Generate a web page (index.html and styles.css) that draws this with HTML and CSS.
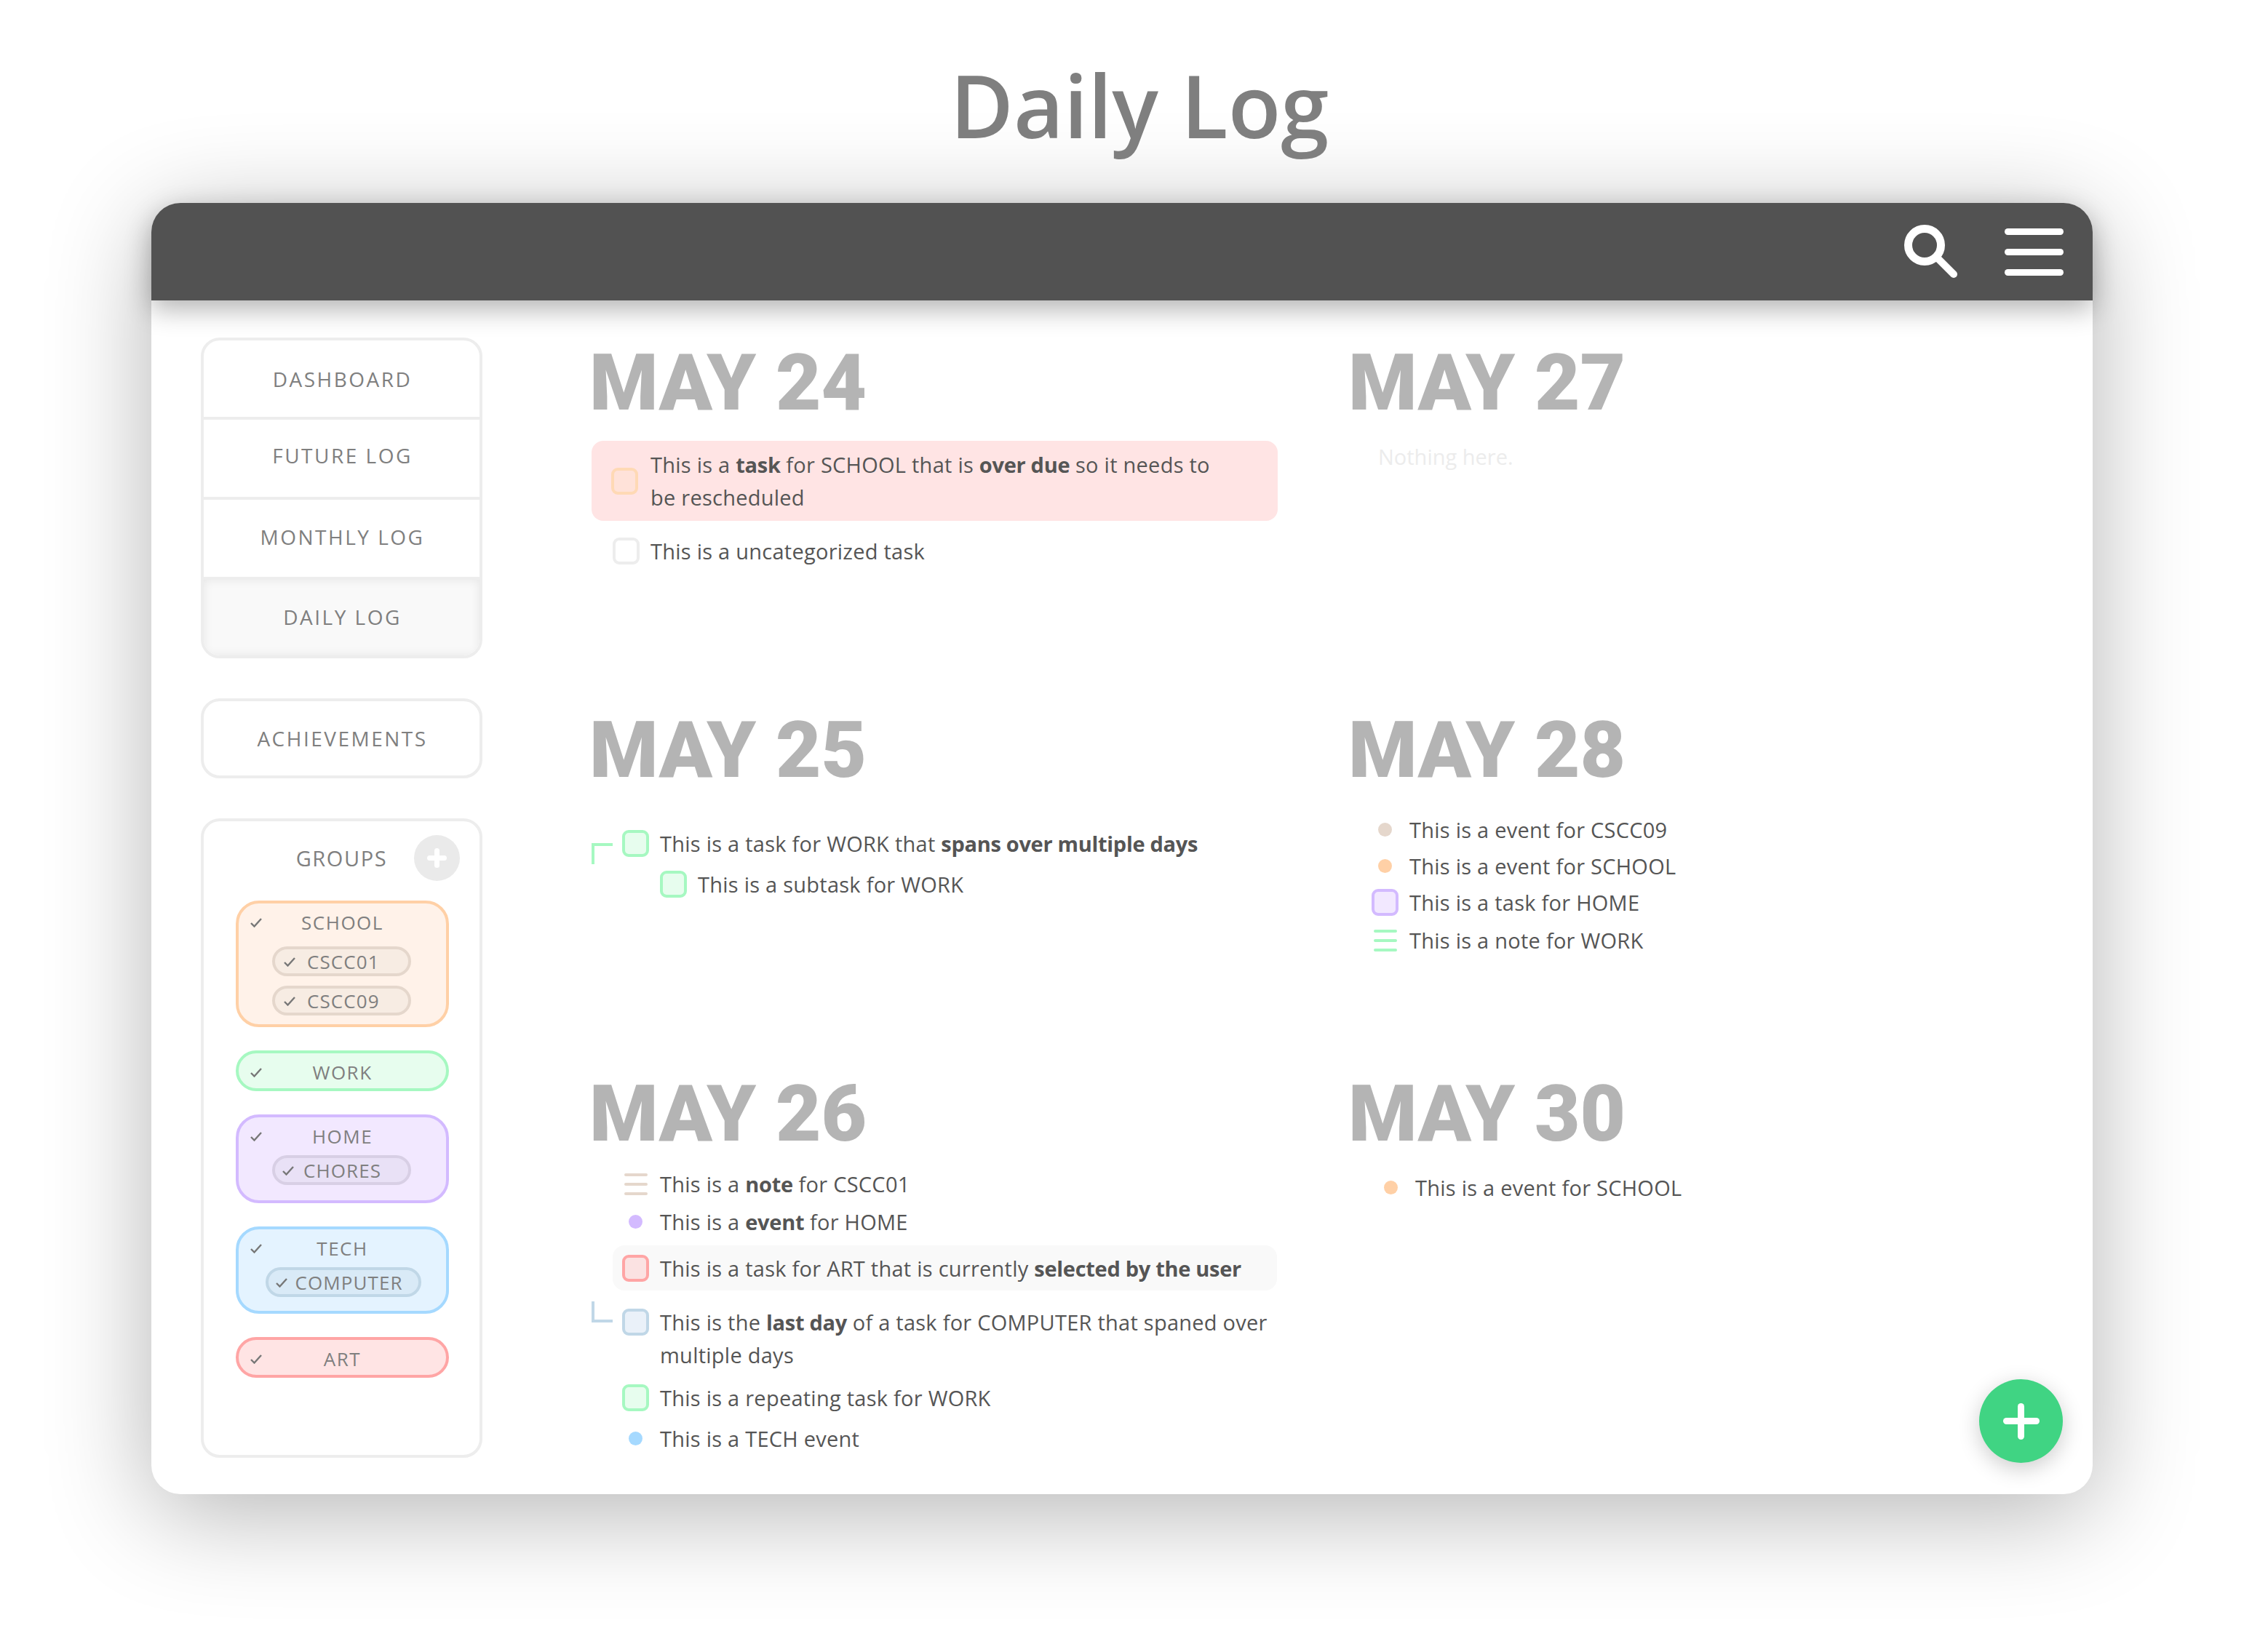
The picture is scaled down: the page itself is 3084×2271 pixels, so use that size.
FILE: index.html
```html
<!DOCTYPE html>
<html lang="en">
<head>
    <meta charset="UTF-8">
    <title>Daily Log</title>
    <link rel="stylesheet" href="styles.css">
</head>
<body>
    <h1 class="page-title">Daily Log</h1>
    <div class="window">
        <header class="topbar">
            <svg class="icon-search" width="74" height="74" viewBox="0 0 74 74">
                <circle cx="28" cy="28" r="22.5" fill="none" stroke="#fff" stroke-width="11"/>
                <line x1="44" y1="44" x2="68" y2="68" stroke="#fff" stroke-width="10" stroke-linecap="round"/>
            </svg>
            <div class="icon-menu"><span></span><span></span><span></span></div>
        </header>
        <div class="content">
            <aside class="sidebar">
                <nav class="panel nav">
                    <a class="nav-item">DASHBOARD</a>
                    <a class="nav-item raised">FUTURE LOG</a>
                    <a class="nav-item raised-less">MONTHLY LOG</a>
                    <a class="nav-item active">DAILY LOG</a>
                </nav>
                <a class="panel achievements">ACHIEVEMENTS</a>
                <section class="panel groups">
                    <div class="groups-head">
                        <span></span>
                        <span class="groups-title">GROUPS</span>
                        <button class="add-group"><span class="plus"></span></button>
                    </div>
                    <div class="group school school-box">
                        <div class="group-head"><svg class="check" viewBox="0 0 16 14"><path d="M1 8l4.500 4.500L15 2"/></svg><span class="group-name">SCHOOL</span></div>
                        <div class="pills pills-loose">
                            <div class="pill"><svg class="check" viewBox="0 0 16 14"><path d="M1 8l4.500 4.500L15 2"/></svg>CSCC01</div>
                            <div class="pill"><svg class="check" viewBox="0 0 16 14"><path d="M1 8l4.500 4.500L15 2"/></svg>CSCC09</div>
                        </div>
                    </div>
                    <div class="group work">
                        <div class="group-head"><svg class="check" viewBox="0 0 16 14"><path d="M1 8l4.500 4.500L15 2"/></svg><span class="group-name">WORK</span></div>
                    </div>
                    <div class="group home home-box">
                        <div class="group-head"><svg class="check" viewBox="0 0 16 14"><path d="M1 8l4.500 4.500L15 2"/></svg><span class="group-name">HOME</span></div>
                        <div class="pills">
                            <div class="pill pill-chores"><svg class="check" viewBox="0 0 16 14"><path d="M1 8l4.500 4.500L15 2"/></svg>CHORES</div>
                        </div>
                    </div>
                    <div class="group tech tech-box">
                        <div class="group-head"><svg class="check" viewBox="0 0 16 14"><path d="M1 8l4.500 4.500L15 2"/></svg><span class="group-name">TECH</span></div>
                        <div class="pills">
                            <div class="pill pill-computer"><svg class="check" viewBox="0 0 16 14"><path d="M1 8l4.500 4.500L15 2"/></svg>COMPUTER</div>
                        </div>
                    </div>
                    <div class="group art">
                        <div class="group-head"><svg class="check" viewBox="0 0 16 14"><path d="M1 8l4.500 4.500L15 2"/></svg><span class="group-name">ART</span></div>
                    </div>
                </section>
            </aside>

            <main class="days">
                <section class="day">
                    <h2 class="day-title">MAY 24</h2>
                    <div class="entries list-24">
                        <div class="entry overdue">
                            <span class="box box-overdue"></span>
                            <span class="entry-text">This is a <b>task</b> for SCHOOL that is <b>over due</b> so it needs to<br>be rescheduled</span>
                        </div>
                        <div class="entry uncategorized gap-19">
                            <span class="box box-plain"></span>
                            <span class="entry-text">This is a uncategorized task</span>
                        </div>
                    </div>
                </section>
                <section class="day">
                    <h2 class="day-title">MAY 27</h2>
                    <p class="nothing">Nothing here.</p>
                </section>

                <section class="day">
                    <h2 class="day-title">MAY 25</h2>
                    <div class="entries list-25">
                        <div class="entry slot-left">
                            <span class="connector connector-start"></span>
                            <span class="box work"></span>
                            <span class="entry-text">This is a task for WORK that <b>spans over multiple days</b></span>
                        </div>
                        <div class="entry subtask gap-11">
                            <span class="box work"></span>
                            <span class="entry-text">This is a subtask for WORK</span>
                        </div>
                    </div>
                </section>
                <section class="day">
                    <h2 class="day-title">MAY 28</h2>
                    <div class="entries list-28">
                        <div class="entry slot-right">
                            <span class="slot"><i class="dot dot-cscc"></i></span>
                            <span class="entry-text">This is a event for CSCC09</span>
                        </div>
                        <div class="entry slot-right gap-5">
                            <span class="slot"><i class="dot dot-school"></i></span>
                            <span class="entry-text">This is a event for SCHOOL</span>
                        </div>
                        <div class="entry slot-right gap-5">
                            <span class="box home"></span>
                            <span class="entry-text">This is a task for HOME</span>
                        </div>
                        <div class="entry slot-right gap-7">
                            <span class="slot"><i class="note note-work"><u></u><u></u><u></u></i></span>
                            <span class="entry-text">This is a note for WORK</span>
                        </div>
                    </div>
                </section>

                <section class="day">
                    <h2 class="day-title">MAY 26</h2>
                    <div class="entries list-26">
                        <div class="entry slot-left">
                            <span class="slot"><i class="note note-cscc"><u></u><u></u><u></u></i></span>
                            <span class="entry-text">This is a <b>note</b> for CSCC01</span>
                        </div>
                        <div class="entry slot-left gap-7">
                            <span class="slot"><i class="dot dot-home"></i></span>
                            <span class="entry-text">This is a <b>event</b> for HOME</span>
                        </div>
                        <div class="entry selected gap-10">
                            <span class="box art"></span>
                            <span class="entry-text">This is a task for ART that is currently <b>selected by the user</b></span>
                        </div>
                        <div class="entry slot-left top-aligned gap-21">
                            <span class="connector connector-end"></span>
                            <span class="box computer"></span>
                            <span class="entry-text">This is the <b>last day</b> of a task for COMPUTER that spaned over<br>multiple days</span>
                        </div>
                        <div class="entry slot-left gap-14">
                            <span class="box work"></span>
                            <span class="entry-text">This is a repeating task for WORK</span>
                        </div>
                        <div class="entry slot-left gap-11">
                            <span class="slot"><i class="dot dot-tech"></i></span>
                            <span class="entry-text">This is a TECH event</span>
                        </div>
                    </div>
                </section>
                <section class="day">
                    <h2 class="day-title">MAY 30</h2>
                    <div class="entries list-30">
                        <div class="entry slot-far">
                            <span class="slot"><i class="dot dot-school"></i></span>
                            <span class="entry-text">This is a event for SCHOOL</span>
                        </div>
                    </div>
                </section>
            </main>
            <button class="fab"><span class="plus"></span></button>
        </div>
    </div>
</body>
</html>
```

FILE: styles.css
```css
* {
    box-sizing: border-box;
}
body {
    margin: 0;
    width: 3084px;
    height: 2271px;
    background: #fff;
    font-family: "Open Sans", sans-serif;
    overflow: hidden;
}
.page-title {
    margin: 0;
    height: 279px;
    padding: 59px 0 0 48px;
    text-align: center;
    font-family: "Open Sans", sans-serif;
    font-size: 119px;
    line-height: 170px;
    font-weight: 600;
    color: #7f7f7f;
    position: relative;
    z-index: 1;
}
.window {
    width: 2668px;
    margin-left: 208px;
    background: #fff;
    border-radius: 40px;
    box-shadow: 0 24px 140px rgba(0, 0, 0, 0.3);
}
.topbar {
    height: 134px;
    background: #525252;
    border-radius: 40px 40px 0 0;
    box-shadow: 0 12px 36px rgba(0, 0, 0, 0.3);
    display: flex;
    align-items: flex-start;
    padding: 30px 40px 0 0;
    justify-content: flex-end;
    gap: 64px;
    position: relative;
}
.icon-menu {
    width: 81px;
    display: flex;
    flex-direction: column;
    gap: 19px;
    margin-top: 5px;
}
.icon-menu span {
    height: 9px;
    background: #fff;
    border-radius: 5px;
}

.content {
    display: flex;
    padding: 51px 0 50px 68px;
    position: relative;
}
.sidebar {
    width: 387px;
    display: flex;
    flex-direction: column;
    gap: 55px;
    flex-shrink: 0;
}
.panel {
    border: 4px solid #ededed;
    border-radius: 26px;
    color: #7f7f7f;
    font-size: 28px;
    font-weight: 500;
    letter-spacing: 2.5px;
    background: #fff;
}
.nav {
    height: 441px;
    display: flex;
    flex-direction: column;
    overflow: hidden;
}
.nav-item {
    height: 110px;
    display: flex;
    align-items: center;
    justify-content: center;
    border-bottom: 4px solid #ededed;
    padding-left: 2px;
}
.nav-item:first-child {
    height: 109px;
}
.nav-item.raised {
    padding-bottom: 8px;
}
.nav-item.raised-less {
    padding-bottom: 5px;
}
.nav-item.active {
    flex: 1;
    height: auto;
    border-bottom: none;
    padding-bottom: 3px;
    background: #f9f9f9;
    box-shadow: inset 0 0 14px rgba(0, 0, 0, 0.08);
}
.achievements {
    height: 110px;
    display: flex;
    align-items: center;
    justify-content: center;
    padding-left: 2px;
}
.groups {
    height: 879px;
    padding: 19px 0 0;
    display: flex;
    flex-direction: column;
    align-items: center;
    gap: 32px;
}
.groups-head {
    width: 100%;
    display: grid;
    grid-template-columns: 1fr auto 1fr;
    align-items: center;
    margin-bottom: -5px;
}
.groups-title {
    font-size: 29px;
    letter-spacing: 1.6px;
}
.add-group {
    justify-self: end;
    margin-right: 27px;
    width: 63px;
    height: 63px;
    border: none;
    border-radius: 50%;
    background: #eaeaea;
    display: flex;
    align-items: center;
    justify-content: center;
    padding: 0;
}
.add-group .plus {
    width: 27px;
    height: 27px;
    --t: 7px;
}
.plus {
    display: block;
    position: relative;
    --t: 9px;
}
.plus::before, .plus::after {
    content: "";
    position: absolute;
    background: #fff;
    border-radius: 5px;
}
.plus::before {
    left: 0;
    right: 0;
    top: calc(50% - var(--t) / 2);
    height: var(--t);
}
.plus::after {
    top: 0;
    bottom: 0;
    left: calc(50% - var(--t) / 2);
    width: var(--t);
}

.group {
    width: 293px;
    height: 56px;
    margin-left: 2px;
    border: 4px solid;
    border-radius: 32px;
    font-size: 26px;
    letter-spacing: 1.5px;
    flex-shrink: 0;
}
.school-box {
    height: 174px;
}
.home-box {
    height: 122px;
}
.tech-box {
    height: 120px;
}
.school.group {
    border-color: #ffd0a6;
    background: #fff2e9;
}
.work.group {
    border-color: #a6f8c1;
    background: #e7fdee;
}
.home.group {
    border-color: #d3baff;
    background: #f2e8ff;
}
.tech.group {
    border-color: #a5d9ff;
    background: #e4f3ff;
}
.art.group {
    border-color: #ffa5a5;
    background: #ffe4e4;
}
.group-head {
    height: 44px;
    padding-top: 8px;
    display: grid;
    grid-template-columns: 1fr auto 1fr;
    align-items: center;
    padding-left: 16px;
    padding-right: 16px;
    line-height: 36px;
}
.check {
    width: 16px;
    height: 14px;
    fill: none;
    stroke: #777;
    stroke-width: 2.4;
}
.pills {
    margin-top: 8px;
    display: flex;
    flex-direction: column;
    align-items: center;
    gap: 13px;
    letter-spacing: 1.1px;
}
.pills-loose {
    margin-top: 15px;
}
.pill {
    width: 191px;
    height: 41px;
    border-radius: 21px;
    border: 4px solid #e5d7cc;
    background: #f7ece3;
    display: flex;
    align-items: center;
    gap: 16px;
    padding-left: 12px;
    margin-left: -2px;
}
.pill-chores {
    border-color: #d8cfe5;
    background: #e9e1f6;
    gap: 13px;
    padding-left: 10px;
}
.pill-computer {
    width: 214px;
    border-color: #c0d7e7;
    background: #d9eaf7;
    gap: 11px;
    padding-left: 10px;
    margin-left: 2px;
}

.days {
    margin-left: 147px;
    flex: 1;
    display: grid;
    grid-template-columns: 1043px 1fr;
    grid-template-rows: 505px 500px auto;
}
.day-title {
    margin: 6px 0 0;
    height: 110px;
    font-family: Roboto, sans-serif;
    font-size: 108px;
    line-height: 112px;
    font-weight: 900;
    letter-spacing: 0;
    color: #b4b4b4;
}
.entries {
    font-size: 29px;
    font-weight: 500;
    letter-spacing: 0.25px;
    color: #555;
    line-height: 45px;
}
.list-24 {
    margin-top: 26px;
}
.list-25 {
    margin-top: 52px;
}
.list-26 {
    margin-top: 20px;
}
.list-28 {
    margin-top: 33px;
}
.list-30 {
    margin-top: 25px;
}
.nothing {
    margin: 25px 0 0 41px;
    font-size: 29px;
    line-height: 45px;
    font-weight: 500;
    color: #ececec;
}
.entry {
    display: flex;
    align-items: center;
    gap: 15px;
    min-height: 45px;
    position: relative;
}
.entry-text b {
    font-weight: 700;
    letter-spacing: -0.3px;
}
.overdue {
    margin-left: 3px;
    width: 943px;
    padding: 10px 0 10px 27px;
    background: #ffe4e4;
    border-radius: 16px;
    gap: 17px;
}
.uncategorized {
    margin-left: 32px;
}
.slot-left {
    margin-left: 45px;
}
.subtask {
    margin-left: 97px;
}
.slot-right {
    margin-left: 32px;
}
.slot-far {
    margin-left: 40px;
}
.selected {
    margin-left: 32px;
    width: 913px;
    height: 62px;
    padding-left: 13px;
    background: #f9f9f9;
    border-radius: 16px;
}
.top-aligned {
    align-items: flex-start;
}
.top-aligned .box {
    margin-top: 4px;
}
.gap-5 { margin-top: 5px; }
.gap-7 { margin-top: 7px; }
.gap-10 { margin-top: 10px; }
.gap-11 { margin-top: 11px; }
.gap-14 { margin-top: 14px; }
.gap-19 { margin-top: 19px; }
.gap-21 { margin-top: 21px; }

.box {
    width: 37px;
    height: 37px;
    flex-shrink: 0;
    border: 4px solid;
    border-radius: 9px;
}
.box.work {
    border-color: #a6f8c1;
    background: #e7fdee;
}
.box.home {
    border-color: #d3baff;
    background: #f2e8ff;
}
.box.art {
    border-color: #ffa5a5;
    background: #fbe2e2;
}
.box.computer {
    border-color: #c0d7e7;
    background: #eaf1f9;
}
.box-overdue {
    border-color: #ffd9b5;
    background: #ffe2d9;
}
.box-plain {
    border-color: #ededed;
    background: #fff;
}
.slot {
    width: 37px;
    flex-shrink: 0;
    display: flex;
    justify-content: center;
}
.dot {
    width: 19px;
    height: 19px;
    border-radius: 50%;
    display: block;
}
.dot-cscc { background: #e5d7cc; }
.dot-school { background: #ffd0a6; }
.dot-home { background: #d3baff; }
.dot-tech { background: #a5d9ff; }
.note {
    width: 32px;
    display: flex;
    flex-direction: column;
    gap: 9px;
}
.note u {
    display: block;
    height: 4px;
    border-radius: 2px;
}
.note-cscc u { background: #e5d7cc; }
.note-work u { background: #a6f8c1; }

.connector {
    position: absolute;
    left: -42px;
    width: 29px;
    height: 29px;
}
.connector-start {
    top: 22px;
    border-top: 4px solid #a6f8c1;
    border-left: 4px solid #a6f8c1;
}
.connector-end {
    top: -6px;
    border-bottom: 4px solid #c0d7e7;
    border-left: 4px solid #c0d7e7;
}
.fab {
    position: absolute;
    right: 41px;
    top: 1483px;
    width: 115px;
    height: 115px;
    border: none;
    border-radius: 50%;
    background: #40d483;
    box-shadow: 0 8px 30px rgba(0, 0, 0, 0.2);
    display: flex;
    align-items: center;
    justify-content: center;
    padding: 0;
}
.fab .plus {
    width: 50px;
    height: 50px;
}
```
